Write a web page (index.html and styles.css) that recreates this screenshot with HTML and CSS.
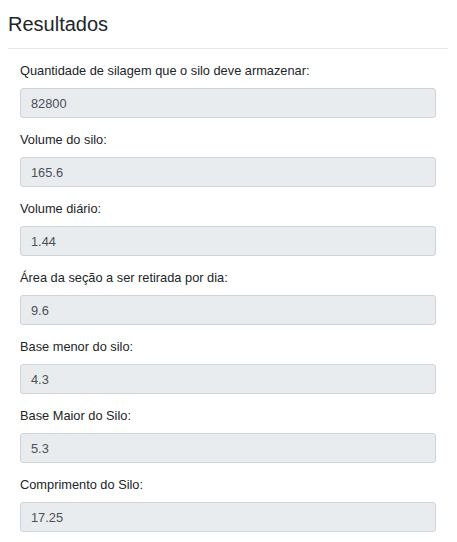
FILE: index.html
```html
<!DOCTYPE html>
<html lang="pt">
<head>
<meta charset="utf-8">
<link rel="stylesheet" href="styles.css">
</head>
<body>
<div class="page">
  <h4 class="title">Resultados</h4>
  <hr class="rule">
  <div class="fields">
    <div class="group"><label class="lbl">Quantidade de silagem que o silo deve armazenar:</label><div class="field">82800</div></div>
    <div class="group"><label class="lbl">Volume do silo:</label><div class="field">165.6</div></div>
    <div class="group"><label class="lbl">Volume diário:</label><div class="field">1.44</div></div>
    <div class="group"><label class="lbl">Área da seção a ser retirada por dia:</label><div class="field">9.6</div></div>
    <div class="group"><label class="lbl">Base menor do silo:</label><div class="field">4.3</div></div>
    <div class="group"><label class="lbl">Base Maior do Silo:</label><div class="field">5.3</div></div>
    <div class="group"><label class="lbl">Comprimento do Silo:</label><div class="field">17.25</div></div>
  </div>
</div>
</body>
</html>
```
FILE: styles.css
```css
* { box-sizing: border-box; }
html, body { margin: 0; padding: 0; background: #fff; }
body {
  font-family: "Liberation Sans", Arial, sans-serif;
  color: #212529;
}
.page { padding: 8px 9px 0 8px; }
.title {
  margin: 0;
  padding-top: 4px;
  font-size: 20px;
  font-weight: 400;
  line-height: 24px;
  color: #212529;
}
.rule {
  margin: 12px 0 0 0;
  border: 0;
  border-top: 1px solid #e6e6e6;
  height: 0;
}
.fields {
  padding: 12px 12px 0 12px;
  display: flex;
  flex-direction: column;
  gap: 12px;
}
.group { display: flex; flex-direction: column; }
.lbl {
  font-size: 12.8px;
  line-height: 20px;
  margin-bottom: 7px;
  color: #212529;
}
.field {
  height: 30px;
  padding: 0 10px;
  display: flex;
  align-items: center;
  font-size: 12.8px;
  color: #495057;
  background: #e9ecef;
  border: 1px solid #ced4da;
  border-radius: 3px;
}
```
